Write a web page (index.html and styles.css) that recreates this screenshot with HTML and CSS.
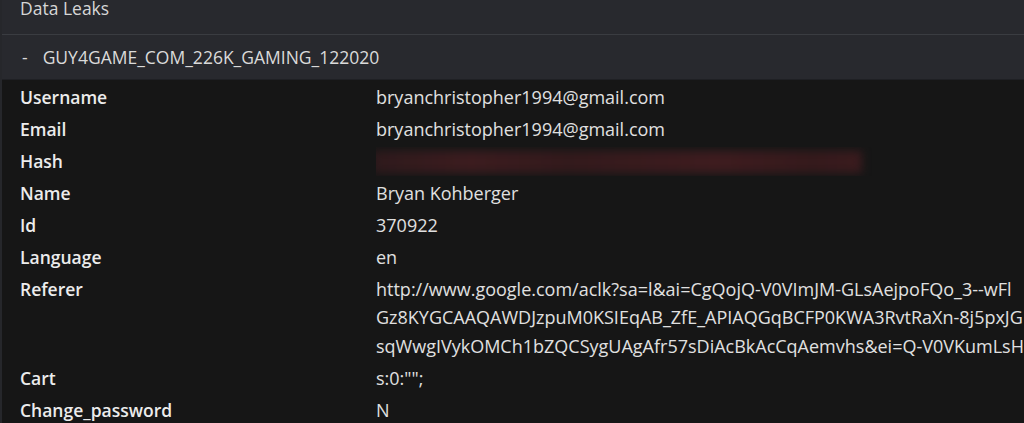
FILE: index.html
```html
<!DOCTYPE html>
<html>
<head>
<meta charset="utf-8">
<link rel="stylesheet" href="styles.css">
</head>
<body>
<div class="page">
  <div class="topbar">Data Leaks</div>
  <div class="leak-head"><span class="dash">-</span><span>GUY4GAME_COM_226K_GAMING_122020</span></div>
  <div class="fields">
    <div class="row"><div class="label">Username</div><div class="value">bryanchristopher1994@gmail.com</div></div>
    <div class="row"><div class="label">Email</div><div class="value">bryanchristopher1994@gmail.com</div></div>
    <div class="row"><div class="label">Hash</div><div class="value"><div class="redacted"></div></div></div>
    <div class="row"><div class="label">Name</div><div class="value">Bryan Kohberger</div></div>
    <div class="row"><div class="label">Id</div><div class="value">370922</div></div>
    <div class="row"><div class="label">Language</div><div class="value">en</div></div>
    <div class="row"><div class="label">Referer</div><div class="value">
      <div class="line">http://www.google.com/aclk?sa=l&amp;ai=CgQojQ-V0VImJM-GLsAejpoFQo_3--wFl</div>
      <div class="line">Gz8KYGCAAQAWDJzpuM0KSIEqAB_ZfE_APIAQGqBCFP0KWA3RvtRaXn-8j5pxJG</div>
      <div class="line">sqWwgIVykOMCh1bZQCSygUAgAfr57sDiAcBkAcCqAemvhs&amp;ei=Q-V0VKumLsH</div>
    </div></div>
    <div class="row"><div class="label">Cart</div><div class="value">s:0:"";</div></div>
    <div class="row"><div class="label">Change_password</div><div class="value">N</div></div>
  </div>
</div>
</body>
</html>
```
FILE: styles.css
```css
html, body {
  margin: 0;
  padding: 0;
  background: #161616;
  overflow: hidden;
}
.page {
  width: 1024px;
  height: 423px;
  font-family: "Open Sans", "Noto Sans", sans-serif;
  color: #e2e2e2;
  border-left: 2px solid #26272b;
  box-sizing: border-box;
  overflow: hidden;
}
.topbar {
  height: 35px;
  box-sizing: border-box;
  background: #28292e;
  border-bottom: 1px solid #3a3c41;
  padding: 0 0 0 18px;
  font-size: 17.5px;
  line-height: 17px;
  color: #d6d6d6;
}
.leak-head {
  height: 45px;
  box-sizing: border-box;
  background: #28292e;
  border-bottom: 1px solid #1f2024;
  display: flex;
  align-items: center;
  padding: 0 0 1px 20px;
  font-size: 17.5px;
  color: #dadada;
  gap: 15px;
}
.fields {
  padding-top: 1.5px;
}
.row {
  display: flex;
  padding: 1.5px 0;
  font-size: 17.5px;
  line-height: 28.9px;
}
.label {
  width: 356px;
  flex: none;
  padding-left: 18px;
  font-weight: 600;
  color: #ececec;
}
.value {
  flex: 1;
  min-width: 0;
  white-space: nowrap;
  overflow: hidden;
  font-size: 18px;
  color: #e0e0e0;
}
.line {
  white-space: nowrap;
}
.redacted {
  width: 490px;
  height: 22px;
  margin: 4px 0 3px -4px;
  background: linear-gradient(90deg, #2e1a1c, #3c1c1f 20%, #331a1c 40%, #3e1c1f 70%, #351a1c 90%, #3a1b1e);
  filter: blur(4px);
}
```
